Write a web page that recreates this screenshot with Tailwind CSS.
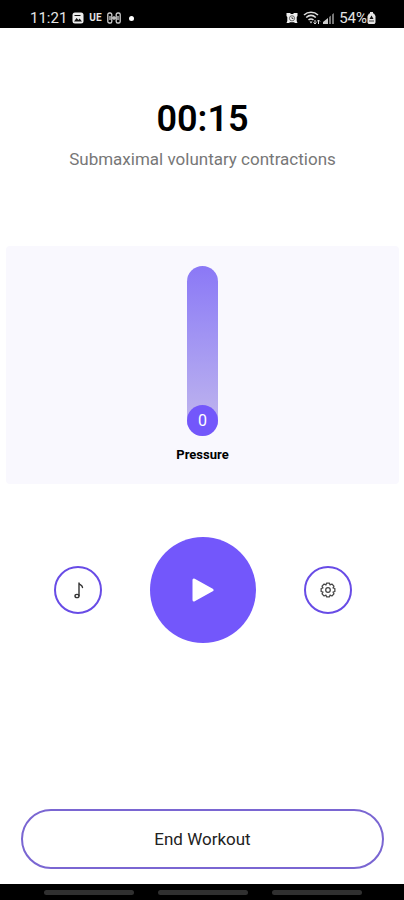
<!DOCTYPE html>
<html lang="en">
<head>
<meta charset="utf-8">
<meta name="viewport" content="width=device-width, initial-scale=1">
<title>Workout</title>
<script src="https://cdn.jsdelivr.net/npm/@tailwindcss/browser@4"></script>
</head>
<body class="flex min-h-screen flex-col bg-white font-[Roboto,sans-serif] text-black">
  <header class="flex h-7 items-end justify-between bg-black pr-7 pl-[30px] text-[#e4e4e4]">
    <div class="flex h-5 items-center gap-[5px]">
      <span class="text-[15px] leading-5">11:21</span>
      <svg class="size-3" viewBox="0 0 12 12"><rect x="0.5" y="0.5" width="11" height="11" rx="2.5" fill="#eee"/><path d="M2 9.500 4.600 6l1.800 2 1.200-1.400L10 9.500Z" fill="#111"/><path d="M2.500 3.500h6" stroke="#111" stroke-width="1"/></svg>
      <span class="text-[10px] leading-5 font-bold">UE</span>
      <svg class="h-3 w-[14px]" viewBox="0 0 14 12" fill="none" stroke="#cfcfcf" stroke-width="1.300"><rect x="0.8" y="1" width="4" height="10" rx="1.600"/><rect x="9.200" y="1" width="4" height="10" rx="1.600"/><path d="M3 4v4M11 4v4M5 6h4M7 4v4"/></svg>
      <span class="ml-[3px] size-[5px] rounded-full bg-white"></span>
    </div>
    <div class="flex h-5 items-center">
      <svg class="mr-[5px] size-3" viewBox="0 0 12 12"><path d="M.5 1H4l1 1h2l1-1h3.500v3l-.8 1v4l.8 2H9l-1-.7H4l-1 .7H.5l.8-2V5L.5 4Z" fill="#eee"/><circle cx="6" cy="6.300" r="2.600" fill="none" stroke="#111" stroke-width=".6"/><path d="M6 4.800v1.700h1.400" stroke="#111" stroke-width=".7" fill="none"/></svg>
      <svg class="mr-[2px] h-[14px] w-[18px]" viewBox="0 0 18 14" fill="none" stroke="#ddd" stroke-width="1.600"><path d="M1 4C5 .4 11 .4 15 4M3.200 6.500c3-2.600 6.600-2.600 9.600 0M5.500 9c1.700-1.400 3.300-1.400 5 0"/><path d="M6.500 10.500h3L8 12.500Z" fill="#ddd" stroke="none"/><path d="M12 9v4m-1.500-1.500L12 13l1.500-1.500M15.500 13V9M14 10.500 15.500 9l1.500 1.500" stroke-width="1"/></svg>
      <svg class="mr-[5px] h-3 w-[11px]" viewBox="0 0 11 12"><path d="M0 12V10L5 6v6Z" fill="#ccc"/><path d="M6 12V5l2-1.500V12ZM9 12V2.500L11 1v11Z" fill="#777"/></svg>
      <span class="text-[15px] leading-5">54%</span>
      <svg class="h-3 w-[9px]" viewBox="0 0 9 12"><path d="M3 0h3v1.500h1L8.500 4v6.500L7.500 12h-6L.5 10.500V4L2 1.500h1Z" fill="#e4e4e4"/><path d="M4.500 3.500 2.500 7h4Z" fill="#111"/><path d="M2 9h5" stroke="#111" stroke-width=".8"/></svg>
    </div>
  </header>

  <main class="flex grow flex-col pl-px">
    <section class="flex flex-col items-center pt-[71px] text-center">
      <h1 class="text-[36px] leading-10 font-semibold">00:15</h1>
      <p class="mt-[10px] text-[17px] leading-5 text-[#777]">Submaximal voluntary contractions</p>
    </section>

    <section class="mx-[5px] mt-[77px] flex flex-col items-center rounded-sm bg-[#f9f8fe] pt-5 pb-5">
      <div class="flex h-[170px] w-[31px] flex-col justify-end rounded-full bg-linear-to-b from-[#8b78f6] to-[#c3b8ec]">
        <span class="flex size-[31px] items-center justify-center rounded-full bg-[#7357fb] text-[16px] leading-5 text-white">0</span>
      </div>
      <h2 class="mt-[10px] text-[13px] leading-[18px] font-bold">Pressure</h2>
    </section>

    <section class="mt-[53px] flex items-center justify-center gap-12">
      <button type="button" aria-label="Music" class="flex size-12 items-center justify-center rounded-full border-2 border-[#684ce6]">
        <svg class="size-5" viewBox="0 0 20 20" fill="none" stroke="#333" stroke-width="1.400" stroke-linecap="round" stroke-linejoin="round"><path d="M11 15.500V3c.3 2.200 3.500 1.500 3.500 4.500"/><ellipse cx="9" cy="16" rx="2" ry="1.600"/></svg>
      </button>
      <button type="button" aria-label="Play" class="flex size-[106px] items-center justify-center rounded-full bg-[#7357fb]">
        <svg class="size-6" viewBox="0 0 24 24"><path d="M3 2v20L21 12Z" fill="#fff" stroke="#fff" stroke-width="3" stroke-linejoin="round"/></svg>
      </button>
      <button type="button" aria-label="Settings" class="flex size-12 items-center justify-center rounded-full border-2 border-[#684ce6]">
        <svg class="size-4" viewBox="1 1 14 14" fill="none" stroke="#444" stroke-width="1.100" stroke-linejoin="round"><path d="M6.700 2h2.600l.5 1.600 1.600-.8 1.800 1.800-.8 1.600 1.600.5v2.600l-1.600.5.8 1.600-1.800 1.800-1.600-.8-.5 1.600H6.700l-.5-1.600-1.600.8-1.800-1.800.8-1.600L2 9.300V6.700l1.600-.5-.8-1.600 1.800-1.800 1.600.8Z"/><circle cx="8" cy="8" r="2"/></svg>
      </button>
    </section>

    <div class="mt-auto px-5 pb-[15px]">
      <button type="button" class="h-[60px] w-full rounded-full border-2 border-[#7a66d2] text-[17px] leading-5 text-[#222]">End Workout</button>
    </div>
  </main>

  <footer class="flex h-4 items-center justify-center gap-6 bg-black pl-px">
    <span class="h-[5px] w-[90px] rounded-full bg-[#303030]"></span>
    <span class="h-[5px] w-[90px] rounded-full bg-[#303030]"></span>
    <span class="h-[5px] w-[90px] rounded-full bg-[#303030]"></span>
  </footer>
</body>
</html>
